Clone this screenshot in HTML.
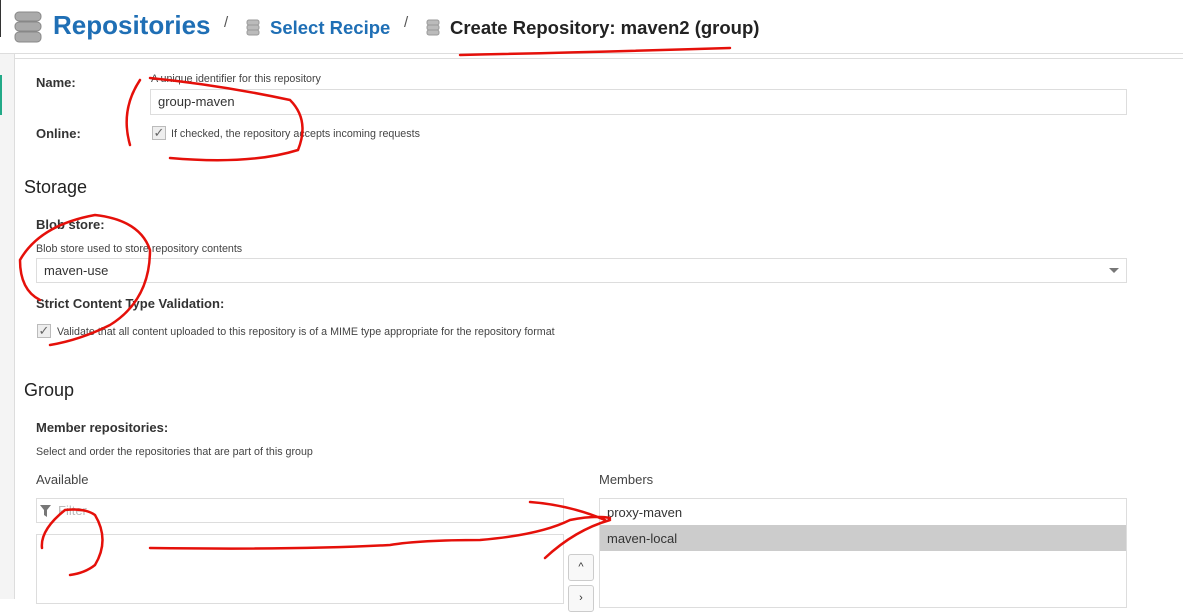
<!DOCTYPE html>
<html><head><style>
body{margin:0;width:1183px;height:599px;overflow:hidden;background:#fff;font-family:"Liberation Sans",sans-serif;color:#333;position:relative}
.a{position:absolute}
.lbl{font-size:13px;font-weight:bold;color:#333}
.help{font-size:10.7px;color:#444}
.inp{border:1px solid #ddd;background:#fff;box-sizing:border-box;font-size:13px;padding-left:7px}
.cb{width:14px;height:14px;border:1px solid #bbb;background:#eee;box-sizing:border-box;font-size:13px;line-height:12px;color:#666;text-align:center}
h2{margin:0;font-size:18px;font-weight:normal;color:#222;position:absolute}
</style></head><body>
<div class="a" style="left:0;top:0;width:1183px;height:53px;background:#fff;border-bottom:1px solid #ddd"></div>
<div class="a" style="left:0;top:0;width:1px;height:37px;background:#333"></div>
<svg class="a" style="left:14px;top:11px" width="28" height="32" viewBox="0 0 28 32"><g fill="#aaa" stroke="#888"><rect x="1" y="1" width="26" height="9" rx="4"/><rect x="1" y="11" width="26" height="9" rx="4"/><rect x="1" y="21" width="26" height="10" rx="4"/></g></svg>
<div class="a" style="left:53px;top:10px;font-size:26px;font-weight:bold;color:#1f6fb5">Repositories</div>
<div class="a" style="left:224px;top:14px;font-size:15px;color:#555">/</div>
<svg class="a" style="left:246px;top:19px" width="14" height="17"><g fill="#bbb" stroke="#999"><rect x="1" y="1" width="12" height="5" rx="2"/><rect x="1" y="6" width="12" height="5" rx="2"/><rect x="1" y="11" width="12" height="5" rx="2"/></g></svg>
<div class="a" style="left:270px;top:17px;font-size:18.5px;font-weight:bold;color:#1f6fb5">Select Recipe</div>
<div class="a" style="left:404px;top:14px;font-size:15px;color:#555">/</div>
<svg class="a" style="left:426px;top:19px" width="14" height="17"><g fill="#bbb" stroke="#999"><rect x="1" y="1" width="12" height="5" rx="2"/><rect x="1" y="6" width="12" height="5" rx="2"/><rect x="1" y="11" width="12" height="5" rx="2"/></g></svg>
<div class="a" style="left:450px;top:17px;font-size:18.5px;font-weight:bold;color:#222">Create Repository: maven2 (group)</div>
<div class="a" style="left:0;top:54px;width:14px;height:545px;background:#f4f4f4;border-right:1px solid #ddd"></div>
<div class="a" style="left:0;top:75px;width:2px;height:40px;background:#2a8"></div>
<div class="a" style="left:14px;top:58px;width:1169px;height:1px;background:#ddd"></div>

<div class="a lbl" style="left:36px;top:75px">Name:</div>
<div class="a help" style="left:151px;top:73px">A unique identifier for this repository</div>
<div class="a inp" style="left:150px;top:89px;width:977px;height:26px;line-height:24px">group-maven</div>
<div class="a lbl" style="left:36px;top:126px">Online:</div>
<div class="a cb" style="left:152px;top:126px">✓</div>
<div class="a help" style="left:171px;top:128px">If checked, the repository accepts incoming requests</div>

<h2 style="left:24px;top:177px">Storage</h2>
<div class="a lbl" style="left:36px;top:217px">Blob store:</div>
<div class="a help" style="left:36px;top:243px">Blob store used to store repository contents</div>
<div class="a inp" style="left:36px;top:258px;width:1091px;height:25px;line-height:23px">maven-use</div>
<div class="a" style="left:1109px;top:268px;border:5px solid transparent;border-top:5px solid #777"></div>
<div class="a lbl" style="left:36px;top:296px">Strict Content Type Validation:</div>
<div class="a cb" style="left:37px;top:324px">✓</div>
<div class="a help" style="left:57px;top:326px">Validate that all content uploaded to this repository is of a MIME type appropriate for the repository format</div>

<h2 style="left:24px;top:380px">Group</h2>
<div class="a lbl" style="left:36px;top:420px">Member repositories:</div>
<div class="a help" style="left:36px;top:446px">Select and order the repositories that are part of this group</div>
<div class="a" style="left:36px;top:472px;font-size:13px;color:#444">Available</div>
<div class="a" style="left:599px;top:472px;font-size:13px;color:#444">Members</div>
<div class="a inp" style="left:36px;top:498px;width:528px;height:25px;line-height:23px;color:#bbb;padding-left:21px">Filter</div>
<svg class="a" style="left:40px;top:505px" width="11" height="12"><path d="M0 0H11L7 5V12L4 10V5Z" fill="#777"/></svg>
<div class="a inp" style="left:36px;top:534px;width:528px;height:70px"></div>
<div class="a" style="left:568px;top:554px;width:24px;height:25px;border:1px solid #ccc;border-radius:3px;background:#f8f8f8;font-size:11px;text-align:center;line-height:24px">^</div>
<div class="a" style="left:568px;top:585px;width:24px;height:25px;border:1px solid #ccc;border-radius:3px;background:#f8f8f8;font-size:11px;text-align:center;line-height:24px">›</div>
<div class="a inp" style="left:599px;top:498px;width:528px;height:110px"></div>
<div class="a" style="left:607px;top:505px;font-size:13px">proxy-maven</div>
<div class="a" style="left:600px;top:525px;width:526px;height:26px;background:#ccc"></div>
<div class="a" style="left:607px;top:531px;font-size:13px">maven-local</div>

<svg class="a" style="left:0;top:0" width="1183" height="599" fill="none" stroke="#e5100a" stroke-width="2.5" stroke-linecap="round">
<path d="M460 55 Q600 52 730 48"/>
<path d="M140 80 Q120 110 130 145 M150 78 Q220 85 290 100 Q310 120 298 150 Q250 165 170 158"/>
<path d="M95 215 Q40 225 20 260 Q20 290 40 300 M95 215 Q140 220 150 250 Q150 300 110 325 Q80 340 50 345"/>
<path d="M65 510 Q40 530 42 548 M65 510 Q85 508 95 515 Q110 540 95 565 Q85 573 70 575"/>
<path d="M150 548 Q300 550 390 545 Q420 540 480 540 Q540 535 570 520 Q595 515 610 518 M530 502 Q570 505 605 520 M545 558 Q575 530 610 520"/>
</svg>
</body></html>
